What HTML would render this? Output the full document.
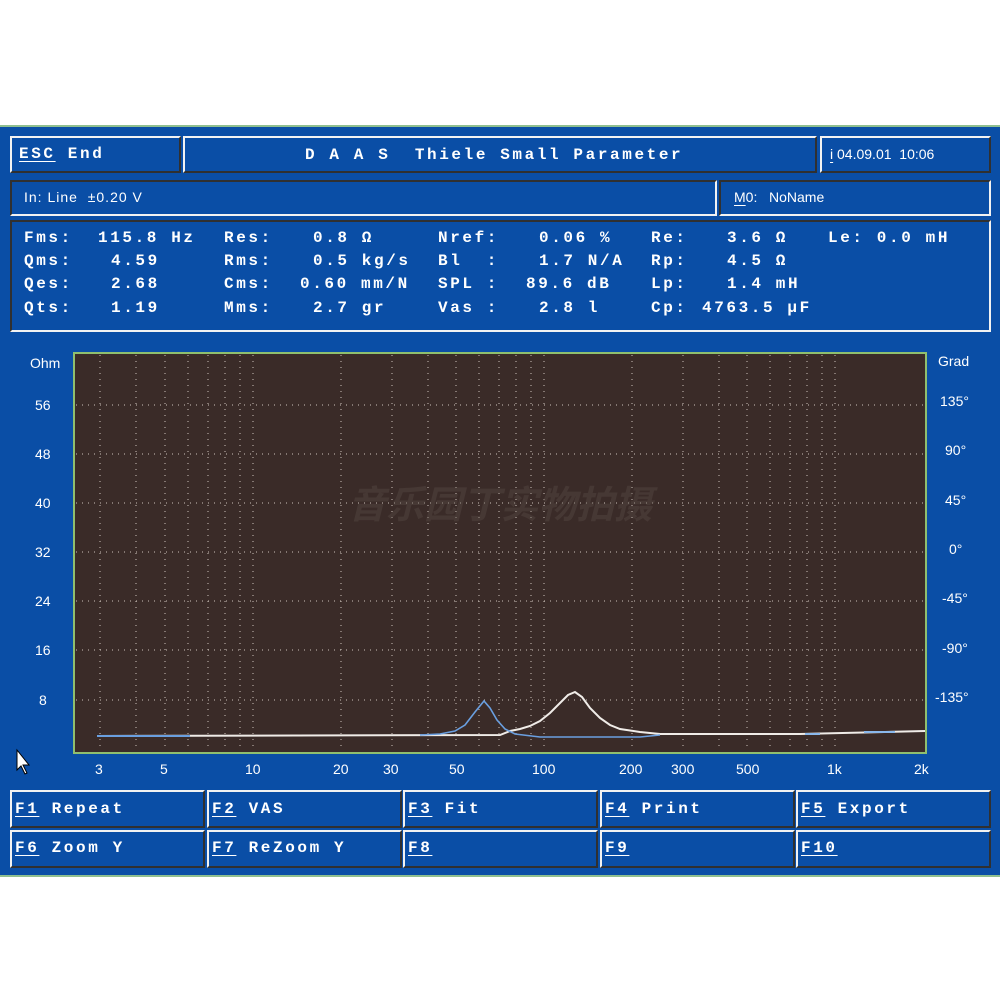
<!DOCTYPE html>
<html><head><meta charset="utf-8"><style>
*{margin:0;padding:0;box-sizing:border-box}
body{width:1000px;height:1000px;background:#fff;position:relative;overflow:hidden;font-family:"Liberation Mono",monospace;color:#fff}
#scr{position:absolute;left:0;top:125px;width:1000px;height:752px;background:#0a4ea6;border-top:2px solid #8fbf8f;border-bottom:2px solid #8fbf8f}
.b{position:absolute;border:2px solid;border-color:#f2f2f2 #303030 #303030 #f2f2f2;background:#0a4ea6}
.t{position:absolute;font-weight:bold;font-size:16px;letter-spacing:2.6px;white-space:pre;line-height:18px}
.s{position:absolute;font-family:"Liberation Sans",sans-serif;font-size:14px;white-space:pre;line-height:16px}
u{text-decoration:underline;text-underline-offset:3px}
.ax{position:absolute;font-family:"Liberation Sans",sans-serif;font-size:14px;line-height:16px}
</style></head><body>
<div id="scr"></div>
<div class="b" style="left:10px;top:136px;width:171px;height:37px"></div>
<div class="b" style="left:183px;top:136px;width:634px;height:37px"></div>
<div class="b" style="left:820px;top:136px;width:171px;height:37px"></div>
<div class="b" style="left:10px;top:180px;width:707px;height:36px;border-color:#303030 #f2f2f2 #f2f2f2 #303030"></div>
<div class="b" style="left:719px;top:180px;width:272px;height:36px;border-color:#303030 #f2f2f2 #f2f2f2 #303030"></div>
<div class="b" style="left:10px;top:220px;width:981px;height:112px;border-color:#303030 #f2f2f2 #f2f2f2 #303030"></div>

<div class="t" style="left:19px;top:145px"><u>ESC</u> End</div>
<div class="t" style="left:305px;top:146px">D A A S  Thiele Small Parameter</div>
<div class="s" style="left:830px;top:146px"><u>i</u> 04.09.01  10:06</div>
<div class="s" style="left:24px;top:189px;letter-spacing:1px">In: Line  ±0.20 V</div>
<div class="s" style="left:734px;top:189px"><u>M</u>0:   NoName</div>

<div class="t" style="left:24px;top:229px">Fms:</div><div class="t" style="left:98px;top:229px">115.8 Hz</div>
<div class="t" style="left:224px;top:229px">Res:</div><div class="t" style="left:313px;top:229px">0.8 Ω</div>
<div class="t" style="left:438px;top:229px">Nref:</div><div class="t" style="left:539px;top:229px">0.06 %</div>
<div class="t" style="left:651px;top:229px">Re:</div><div class="t" style="left:727px;top:229px">3.6 Ω</div>
<div class="t" style="left:828px;top:229px">Le: 0.0 mH</div>

<div class="t" style="left:24px;top:252px">Qms:</div><div class="t" style="left:111px;top:252px">4.59</div>
<div class="t" style="left:224px;top:252px">Rms:</div><div class="t" style="left:313px;top:252px">0.5 kg/s</div>
<div class="t" style="left:438px;top:252px">Bl  :</div><div class="t" style="left:539px;top:252px">1.7 N/A</div>
<div class="t" style="left:651px;top:252px">Rp:</div><div class="t" style="left:727px;top:252px">4.5 Ω</div>

<div class="t" style="left:24px;top:275px">Qes:</div><div class="t" style="left:111px;top:275px">2.68</div>
<div class="t" style="left:224px;top:275px">Cms:</div><div class="t" style="left:300px;top:275px">0.60 mm/N</div>
<div class="t" style="left:438px;top:275px">SPL :</div><div class="t" style="left:526px;top:275px">89.6 dB</div>
<div class="t" style="left:651px;top:275px">Lp:</div><div class="t" style="left:727px;top:275px">1.4 mH</div>

<div class="t" style="left:24px;top:299px">Qts:</div><div class="t" style="left:111px;top:299px">1.19</div>
<div class="t" style="left:224px;top:299px">Mms:</div><div class="t" style="left:313px;top:299px">2.7 gr</div>
<div class="t" style="left:438px;top:299px">Vas :</div><div class="t" style="left:539px;top:299px">2.8 l</div>
<div class="t" style="left:651px;top:299px">Cp:</div><div class="t" style="left:702px;top:299px">4763.5 μF</div>

<svg style="position:absolute;left:0;top:0" width="1000" height="1000">
<rect x="74" y="353" width="852" height="400" fill="#3a2b28" stroke="#8fbf6f" stroke-width="2"/>
<g stroke="#ddd4cb" stroke-width="1" stroke-dasharray="1,5" opacity="0.9">
<line x1="100" y1="355" x2="100" y2="751"/><line x1="136" y1="355" x2="136" y2="751"/><line x1="165" y1="355" x2="165" y2="751"/><line x1="188" y1="355" x2="188" y2="751"/><line x1="208" y1="355" x2="208" y2="751"/><line x1="225" y1="355" x2="225" y2="751"/><line x1="240" y1="355" x2="240" y2="751"/><line x1="253" y1="355" x2="253" y2="751"/>
<line x1="341" y1="355" x2="341" y2="751"/><line x1="392" y1="355" x2="392" y2="751"/><line x1="428" y1="355" x2="428" y2="751"/><line x1="456" y1="355" x2="456" y2="751"/><line x1="479" y1="355" x2="479" y2="751"/><line x1="499" y1="355" x2="499" y2="751"/><line x1="516" y1="355" x2="516" y2="751"/><line x1="531" y1="355" x2="531" y2="751"/><line x1="544" y1="355" x2="544" y2="751"/>
<line x1="632" y1="355" x2="632" y2="751"/><line x1="683" y1="355" x2="683" y2="751"/><line x1="719" y1="355" x2="719" y2="751"/><line x1="747" y1="355" x2="747" y2="751"/><line x1="770" y1="355" x2="770" y2="751"/><line x1="790" y1="355" x2="790" y2="751"/><line x1="807" y1="355" x2="807" y2="751"/><line x1="822" y1="355" x2="822" y2="751"/><line x1="835" y1="355" x2="835" y2="751"/>
<line x1="76" y1="405" x2="924" y2="405"/><line x1="76" y1="454" x2="924" y2="454"/><line x1="76" y1="503" x2="924" y2="503"/><line x1="76" y1="552" x2="924" y2="552"/><line x1="76" y1="601" x2="924" y2="601"/><line x1="76" y1="650" x2="924" y2="650"/><line x1="76" y1="700" x2="924" y2="700"/>
</g>
<text x="500" y="518" text-anchor="middle" font-family="'Liberation Sans','Noto Sans CJK SC',sans-serif" font-size="38" font-weight="bold" font-style="italic" fill="#5a4c48" opacity="0.4">音乐园丁实物拍摄</text>
<polyline fill="none" stroke="#f0ece8" stroke-width="2" points="97,736 500,735 510,731 520,729 530,726 540,721 550,713 560,703 568,695 575,692 582,697 590,708 600,718 610,725 620,729 640,732 660,734 800,734 925,731"/>
<polyline fill="none" stroke="#6a9fe0" stroke-width="2" points="97,736 190,736"/>
<polyline fill="none" stroke="#6a9fe0" stroke-width="1.6" points="420,735 440,734 455,731 465,725 475,712 484,701 490,708 497,720 505,729 515,734 540,737 640,737 660,735"/>
<polyline fill="none" stroke="#8ab8ec" stroke-width="2" points="805,734 820,734"/>
<polyline fill="none" stroke="#8ab8ec" stroke-width="2" points="864,732 895,732"/>
<path d="M17 750 L17 770 L21 766 L25 774 L27 773 L23 765 L29 765 Z" fill="#fff" stroke="#000" stroke-width="1"/>
</svg>

<div class="ax" style="left:30px;top:355px">Ohm</div>
<div class="ax" style="left:35px;top:397px">56</div>
<div class="ax" style="left:35px;top:446px">48</div>
<div class="ax" style="left:35px;top:495px">40</div>
<div class="ax" style="left:35px;top:544px">32</div>
<div class="ax" style="left:35px;top:593px">24</div>
<div class="ax" style="left:35px;top:642px">16</div>
<div class="ax" style="left:39px;top:692px">8</div>
<div class="ax" style="left:938px;top:353px">Grad</div>
<div class="ax" style="left:940px;top:393px">135°</div>
<div class="ax" style="left:945px;top:442px">90°</div>
<div class="ax" style="left:945px;top:492px">45°</div>
<div class="ax" style="left:949px;top:541px">0°</div>
<div class="ax" style="left:942px;top:590px">-45°</div>
<div class="ax" style="left:942px;top:640px">-90°</div>
<div class="ax" style="left:935px;top:689px">-135°</div>

<div class="ax" style="left:95px;top:761px">3</div>
<div class="ax" style="left:160px;top:761px">5</div>
<div class="ax" style="left:245px;top:761px">10</div>
<div class="ax" style="left:333px;top:761px">20</div>
<div class="ax" style="left:383px;top:761px">30</div>
<div class="ax" style="left:449px;top:761px">50</div>
<div class="ax" style="left:532px;top:761px">100</div>
<div class="ax" style="left:619px;top:761px">200</div>
<div class="ax" style="left:671px;top:761px">300</div>
<div class="ax" style="left:736px;top:761px">500</div>
<div class="ax" style="left:827px;top:761px">1k</div>
<div class="ax" style="left:914px;top:761px">2k</div>

<div class="b" style="left:10px;top:790px;width:195px;height:38px"></div>
<div class="b" style="left:207px;top:790px;width:195px;height:38px"></div>
<div class="b" style="left:403px;top:790px;width:195px;height:38px"></div>
<div class="b" style="left:600px;top:790px;width:195px;height:38px"></div>
<div class="b" style="left:796px;top:790px;width:195px;height:38px"></div>
<div class="b" style="left:10px;top:830px;width:195px;height:38px"></div>
<div class="b" style="left:207px;top:830px;width:195px;height:38px"></div>
<div class="b" style="left:403px;top:830px;width:195px;height:38px"></div>
<div class="b" style="left:600px;top:830px;width:195px;height:38px"></div>
<div class="b" style="left:796px;top:830px;width:195px;height:38px"></div>
<div class="t" style="left:15px;top:800px"><u>F1</u> Repeat</div>
<div class="t" style="left:212px;top:800px"><u>F2</u> VAS</div>
<div class="t" style="left:408px;top:800px"><u>F3</u> Fit</div>
<div class="t" style="left:605px;top:800px"><u>F4</u> Print</div>
<div class="t" style="left:801px;top:800px"><u>F5</u> Export</div>
<div class="t" style="left:15px;top:839px"><u>F6</u> Zoom Y</div>
<div class="t" style="left:212px;top:839px"><u>F7</u> ReZoom Y</div>
<div class="t" style="left:408px;top:839px"><u>F8</u></div>
<div class="t" style="left:605px;top:839px"><u>F9</u></div>
<div class="t" style="left:801px;top:839px"><u>F10</u></div>
</body></html>
